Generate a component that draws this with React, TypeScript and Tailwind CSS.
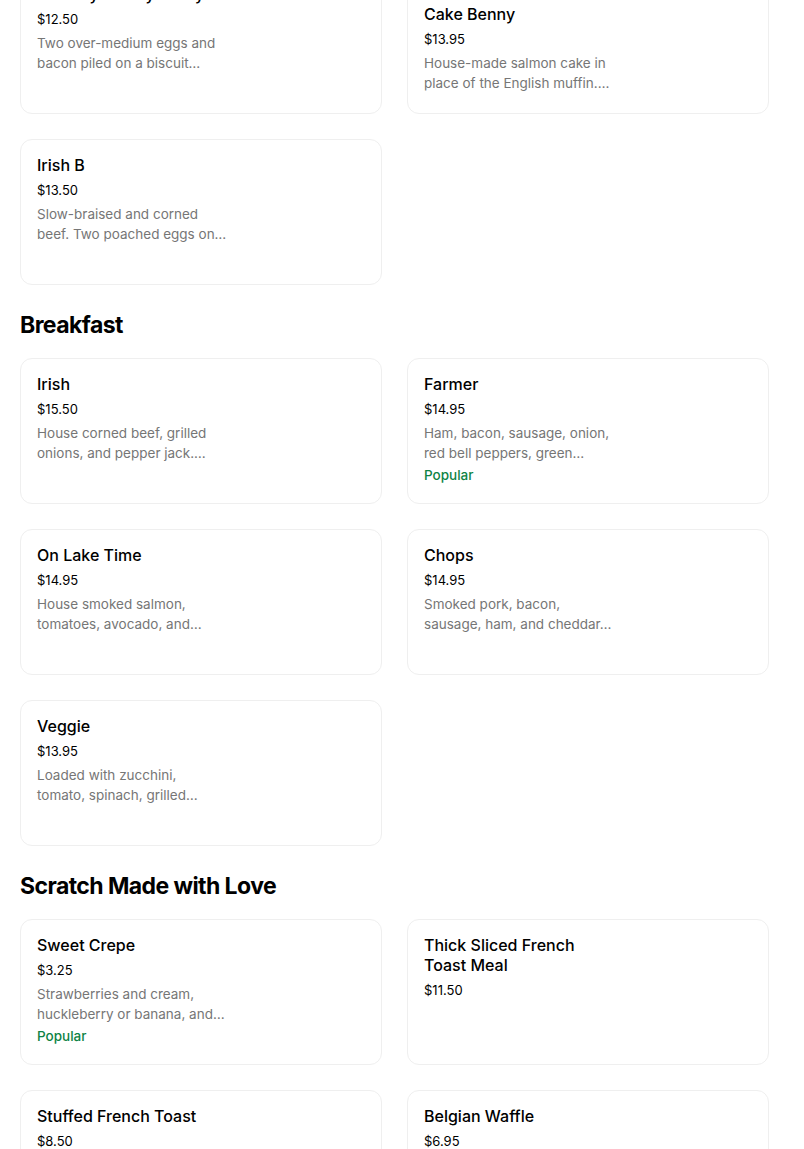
// Menu list: sections of item cards in a two-column grid.
type Item = {
  name: string
  price: string
  desc?: [string, string]
  popular?: boolean
}

type Section = {
  title?: string
  items: Item[]
}

// descriptions are stored as the two visible lines (the app clamps them)
const sections: Section[] = [
  {
    items: [
      {
        name: 'Country Jersey Gravy',
        price: '$12.50',
        desc: ['Two over-medium eggs and', 'bacon piled on a biscuit…'],
      },
      {
        name: 'Homemade Salmon Cake Benny',
        price: '$13.95',
        desc: ['House-made salmon cake in', 'place of the English muffin.…'],
      },
      {
        name: 'Irish B',
        price: '$13.50',
        desc: ['Slow-braised and corned', 'beef. Two poached eggs on…'],
      },
    ],
  },
  {
    title: 'Breakfast',
    items: [
      {
        name: 'Irish',
        price: '$15.50',
        desc: ['House corned beef, grilled', 'onions, and pepper jack.…'],
      },
      {
        name: 'Farmer',
        price: '$14.95',
        desc: ['Ham, bacon, sausage, onion,', 'red bell peppers, green…'],
        popular: true,
      },
      {
        name: 'On Lake Time',
        price: '$14.95',
        desc: ['House smoked salmon,', 'tomatoes, avocado, and…'],
      },
      {
        name: 'Chops',
        price: '$14.95',
        desc: ['Smoked pork, bacon,', 'sausage, ham, and cheddar…'],
      },
      {
        name: 'Veggie',
        price: '$13.95',
        desc: ['Loaded with zucchini,', 'tomato, spinach, grilled…'],
      },
    ],
  },
  {
    title: 'Scratch Made with Love',
    items: [
      {
        name: 'Sweet Crepe',
        price: '$3.25',
        desc: ['Strawberries and cream,', 'huckleberry or banana, and…'],
        popular: true,
      },
      { name: 'Thick Sliced French Toast Meal', price: '$11.50' },
      {
        name: 'Stuffed French Toast',
        price: '$8.50',
        desc: ['Cream cheese stuffed French', 'toast with fresh berries…'],
      },
      {
        name: 'Belgian Waffle',
        price: '$6.95',
        desc: ['Crisp golden waffle with', 'whipped butter and syrup…'],
      },
    ],
  },
]

const font = { fontFamily: 'Inter, "Noto Sans", Arial, sans-serif' }

function ItemCard({ item }: { item: Item }) {
  return (
    <div className="h-[146px] rounded-xl border border-[#efefef] bg-white px-4 pt-[15px]">
      <div className="w-[190px]">
        <h3 className="text-[16px] font-medium leading-5 text-black">{item.name}</h3>
        <p className="mt-[5px] text-[13px] leading-5 text-black">{item.price}</p>
        {item.desc && (
          <p className="mt-1 whitespace-nowrap text-[13.5px] leading-5 text-[#767676]">
            {item.desc[0]}
            <br />
            {item.desc[1]}
          </p>
        )}
        {item.popular && (
          <p className="mt-0.5 text-[13.5px] font-medium leading-5 text-[#0e8345]">Popular</p>
        )}
      </div>
    </div>
  )
}

export default function App() {
  return (
    <div className="h-[1149px] overflow-hidden bg-white" style={font}>
      <div className="-mt-8 ml-5 w-[749px]">
        {sections.map((s, i) => (
          <section key={i} className={i > 0 ? 'mt-6' : ''}>
            {s.title && (
              <h2 className="mb-[17px] text-[23px] font-bold leading-8 tracking-tight text-black">
                {s.title}
              </h2>
            )}
            <div className="grid grid-cols-2 gap-[25px]">
              {s.items.map((it) => (
                <ItemCard key={it.name} item={it} />
              ))}
            </div>
          </section>
        ))}
      </div>
    </div>
  )
}
